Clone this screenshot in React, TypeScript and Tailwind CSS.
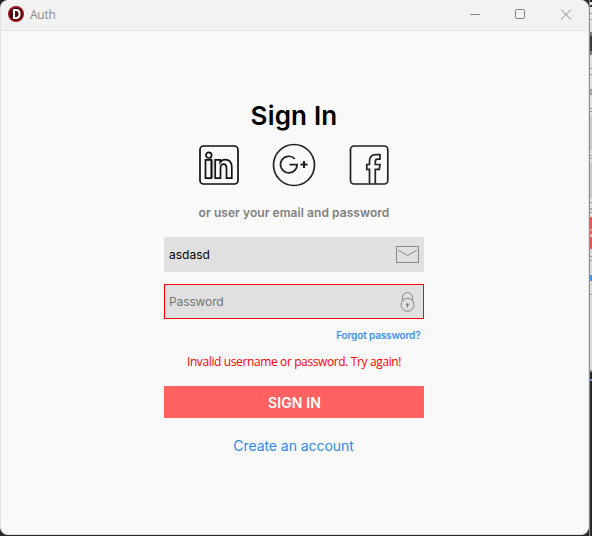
import React from "react";

type Segment = { h: number; c: string };

// Sliver of the window lying behind this one, top to bottom.
const backdrop: Segment[] = [
  { h: 2, c: "#1c1c1e" },
  { h: 3, c: "#ececec" },
  { h: 2, c: "#2a2a2a" },
  { h: 6, c: "#e6e6e6" },
  { h: 1, c: "#9c9c9c" },
  { h: 5, c: "#e9e9e9" },
  { h: 1, c: "#9c9c9c" },
  { h: 12, c: "#e1e1e1" },
  { h: 4, c: "#7b7b7b" },
  { h: 15, c: "#3a3a3a" },
  { h: 4, c: "#7b7b7b" },
  { h: 13, c: "#e1e1e1" },
  { h: 1, c: "#9c9c9c" },
  { h: 5, c: "#e1e1e1" },
  { h: 1, c: "#9c9c9c" },
  { h: 14, c: "#e1e1e1" },
  { h: 2, c: "#8f8f8f" },
  { h: 1, c: "#c4c4c4" },
  { h: 1, c: "#8f8f8f" },
  { h: 1, c: "#c4c4c4" },
  { h: 1, c: "#8f8f8f" },
  { h: 13, c: "#e1e1e1" },
  { h: 1, c: "#9c9c9c" },
  { h: 2, c: "#e1e1e1" },
  { h: 1, c: "#9c9c9c" },
  { h: 4, c: "#e1e1e1" },
  { h: 34, c: "#c9c9c9" },
  { h: 5, c: "#e1e1e1" },
  { h: 1, c: "#9c9c9c" },
  { h: 2, c: "#e1e1e1" },
  { h: 1, c: "#9c9c9c" },
  { h: 4, c: "#e1e1e1" },
  { h: 35, c: "#c9c9c9" },
  { h: 4, c: "#e1e1e1" },
  { h: 1, c: "#9c9c9c" },
  { h: 5, c: "#e1e1e1" },
  { h: 2, c: "#a5a5a5" },
  { h: 2, c: "#e1e1e1" },
  { h: 1, c: "#9c9c9c" },
  { h: 4, c: "#e1e1e1" },
  { h: 12, c: "#e2595b" },
  { h: 2, c: "#f0a5a5" },
  { h: 3, c: "#e2595b" },
  { h: 3, c: "#f0b5b5" },
  { h: 12, c: "#e2595b" },
  { h: 7, c: "#d8d8d8" },
  { h: 1, c: "#9c9c9c" },
  { h: 3, c: "#dcdcdc" },
  { h: 1, c: "#9c9c9c" },
  { h: 14, c: "#dcdcdc" },
  { h: 6, c: "#4a8fdc" },
  { h: 13, c: "#dcdcdc" },
  { h: 1, c: "#9c9c9c" },
  { h: 75, c: "#dcdcdc" },
  { h: 2, c: "#9b8791" },
  { h: 7, c: "#26272b" },
  { h: 2, c: "#7795c4" },
];

function Backdrop() {
  return (
    <div className="flex h-[536px] w-[3px] shrink-0 flex-col overflow-hidden border-l border-[#8e8e90]">
      {backdrop.map((s, i) => (
        <div key={i} className="shrink-0" style={{ height: s.h, backgroundColor: s.c }} />
      ))}
    </div>
  );
}

function Logo() {
  return (
    <svg width="16" height="16" viewBox="0 0 16 16" className="mb-[2px] shrink-0">
      <circle cx="8" cy="8" r="8" fill="#a3141b" />
      <circle cx="8" cy="8" r="6.6" fill="#4f070b" />
      <path d="M6 4H8C10.600 4 11.600 5.700 11.600 8s-1 4-3.600 4H6Z" fill="none" stroke="#fff" strokeWidth="2.100" />
    </svg>
  );
}

function TitleBar() {
  return (
    <header className="flex h-[30px] shrink-0 items-center border-b border-[#e5e5e5] bg-[#f2f2f2] pr-4 pb-[2px] pl-[7px]">
      <Logo />
      <span className="ml-[6px] grow font-['Open_Sans','Noto_Sans',sans-serif] text-[12px] leading-4 tracking-[-0.25px] text-[#8c8c8c]">Auth</span>
      <svg width="102" height="11" viewBox="0 0 102 11" fill="none" stroke="#858585">
        <path d="M0 5.500H10" />
        <rect x="45.500" y="0.500" width="9" height="9" rx="1" />
        <path d="M91 0.500l10 10M101 0.500l-10 10" />
      </svg>
    </header>
  );
}

function LinkedIn() {
  return (
    <svg width="40" height="40" viewBox="0 0 40 40" fill="none" stroke="#111" strokeWidth="1.700">
      <rect x="1" y="1" width="38" height="38" rx="3.500" />
      <circle cx="9.800" cy="10.200" r="2.800" />
      <path d="M13.500 15v18" stroke="#888" strokeWidth="1.500" />
      <path d="M6.500 14.900h5.800v18.200H6.500ZM16.200 14.900h5v2.300c1-1.600 2.800-2.600 5-2.600 4.500 0 6.600 2.900 6.600 8v10.500h-5.300V23.500c0-2.900-1-4.300-2.900-4.300-2 0-3.100 1.400-3.100 4.300v9.600h-5.300Z" />
    </svg>
  );
}

function GooglePlus() {
  return (
    <svg width="44" height="44" viewBox="0 0 44 44" fill="none" stroke="#222" strokeWidth="1.700">
      <circle cx="22" cy="22" r="20.500" />
      <path d="M22.800 15.800A8.300 8.300 0 1 0 25.100 21.700H17.500" />
      <path d="M28.500 21.500h7M32 18v7" strokeWidth="2" />
    </svg>
  );
}

function Facebook() {
  return (
    <svg width="40" height="40" viewBox="0 0 40 40" fill="none" stroke="#222" strokeWidth="1.700">
      <rect x="1.500" y="1" width="37.300" height="38" rx="3.500" />
      <path d="M20.500 38.500V24.300H17.800V19.500H20.500V16.500C20.500 12 23 9.700 27 9.700H31V14.100H28.500C27.200 14.100 26.300 15 26.300 16.600V19.500H31L30.300 24.300H26.300V38.500" />
    </svg>
  );
}

function Mail() {
  return (
    <svg width="23" height="17" viewBox="0 0 23 17" fill="none" stroke="#888">
      <rect x="0.500" y="0.500" width="22" height="16" />
      <path d="M2 4l9.500 5.500L21 4" />
    </svg>
  );
}

function Lock() {
  return (
    <svg width="15" height="20" viewBox="0 0 15 20" fill="none" stroke="#858585">
      <circle cx="7.500" cy="12.800" r="6.500" />
      <path d="M2.500 8.600V5.500a5 5 0 0 1 10 0v3.100" />
      <circle cx="7.500" cy="12.500" r="1.300" fill="#777" stroke="none" />
      <path d="M7.500 12v3.500" stroke="#777" />
    </svg>
  );
}

export default function App() {
  return (
    <div className="flex h-[536px] w-[592px] overflow-hidden bg-[#26272b] font-['Inter',sans-serif]">
      <div className="flex h-[535px] w-[589px] shrink-0 flex-col overflow-hidden rounded-lg border border-[#e2e2e2] border-t-[#f2f2f2] bg-[#f9f9f9]">
        <TitleBar />
        <main className="flex grow flex-col items-center pr-px">
          <h1 className="mt-[69px] text-[26px] leading-8 font-semibold tracking-[0.2px] text-black">Sign In</h1>
          <div className="mt-[11px] flex h-11 w-[190px] items-center justify-between">
            <LinkedIn />
            <GooglePlus />
            <Facebook />
          </div>
          <p className="mt-[18px] text-[12px] leading-4 font-semibold tracking-[0.06px] text-[#808080]">or user your email and password</p>
          <div className="mt-4 flex h-[35px] w-[260px] items-center justify-between bg-[#e0e0e0] pr-[5px] pl-[5px]">
            <span className="text-[12px] text-black">asdasd</span>
            <Mail />
          </div>
          <div className="mt-3 flex h-[35px] w-[260px] items-center justify-between border border-[#f00] bg-[#e0e0e0] pr-2 pl-1">
            <span className="text-[12px] tracking-[-0.12px] text-[#767676]">Password</span>
            <Lock />
          </div>
          <a className="mt-2 w-[257px] pr-0.5 text-right text-[10px] leading-4 font-semibold tracking-[-0.14px] text-[#3d92ee]">Forgot password?</a>
          <p className="mt-[11px] font-['Open_Sans','Noto_Sans',sans-serif] text-[12px] leading-4 tracking-[-0.38px] text-[#f00]">Invalid username or password. Try again!</p>
          <button className="mt-4 h-8 w-[260px] bg-[#ff6060] pl-px text-[14px] font-semibold tracking-[0.14px] text-white">SIGN IN</button>
          <a className="mt-[18px] pr-px text-[14px] leading-5 tracking-[-0.06px] text-[#2e8bed]">Create an account</a>
        </main>
      </div>
      <Backdrop />
    </div>
  );
}
